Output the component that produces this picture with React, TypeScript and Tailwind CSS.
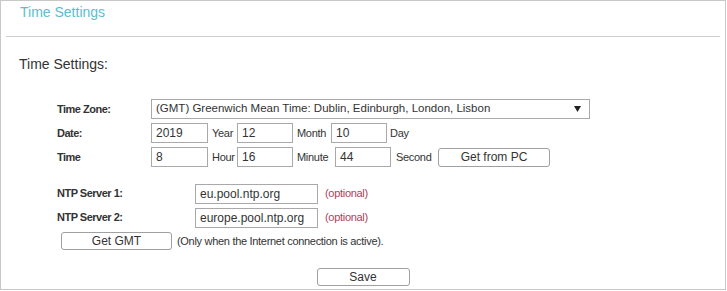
export default function App() {
  const base = "h-[20px] border border-[#a9a9a9] bg-white pl-[4px] flex items-center text-[#333]";
  const box = base + " text-[12px]";
  const lbl = "text-[11px] font-bold tracking-[-0.5px]";
  const txt = "text-[11px] tracking-[-0.3px]";
  const btn = "border border-[#a0a0a0] rounded-[3px] bg-white text-[12px] leading-none text-[#333]";
  return (
    <div className="w-[726px] h-[290px] border border-[#c8c8c8] bg-white text-[#333] font-['Liberation_Sans',Arial,sans-serif]">
      <div className="h-[35px] pl-[19px] pt-[2px] text-[14px] leading-[18px] text-[#5bbdd2]">Time Settings</div>
      <div className="mx-[5px] h-px bg-[#cfcfcf]" />
      <div className="mt-[19px] pl-[18px] text-[14px] leading-[16px]">Time Settings:</div>

      <div className="mt-[27px] pl-[56px] flex flex-col">
        <div className="flex items-center h-[20px]">
          <div className={"w-[94px] " + lbl}>Time Zone:</div>
          <div className={base + " w-[439px] justify-between pr-[8px] text-[11.5px]"}>
            <span>(GMT) Greenwich Mean Time: Dublin, Edinburgh, London, Lisbon</span>
            <svg width="7" height="6" viewBox="0 0 7 6"><path d="M0 0h7L3.5 6z" fill="#222" /></svg>
          </div>
        </div>

        <div className="flex items-center h-[20px] mt-[4px]">
          <div className={"w-[94px] " + lbl}>Date:</div>
          <div className={box + " w-[57px]"}>2019</div>
          <span className={"w-[29px] pl-[4px] " + txt}>Year</span>
          <div className={box + " w-[56px]"}>12</div>
          <span className={"w-[38px] pl-[4px] " + txt}>Month</span>
          <div className={box + " w-[56px]"}>10</div>
          <span className={"pl-[3px] " + txt}>Day</span>
        </div>

        <div className="flex items-center h-[20px] mt-[4px]">
          <div className={"w-[94px] " + lbl}>Time</div>
          <div className={box + " w-[57px]"}>8</div>
          <span className={"w-[29px] pl-[4px] " + txt}>Hour</span>
          <div className={box + " w-[56px]"}>16</div>
          <span className={"w-[42px] pl-[4px] " + txt}>Minute</span>
          <div className={box + " w-[56px]"}>44</div>
          <span className={"w-[47px] pl-[5px] " + txt}>Second</span>
          <button className={"w-[112px] h-[19px] " + btn}>Get from PC</button>
        </div>

        <div className="flex items-center h-[19px] mt-[17px]">
          <div className={"w-[138px] " + lbl}>NTP Server 1:</div>
          <div className={box + " w-[123px] h-[19px]"}>eu.pool.ntp.org</div>
          <span className={"ml-[7px] text-[#a8435c] " + txt}>(optional)</span>
        </div>
        <div className="flex items-center h-[19px] mt-[5px]">
          <div className={"w-[138px] " + lbl}>NTP Server 2:</div>
          <div className={box + " w-[123px] h-[19px]"}>europe.pool.ntp.org</div>
          <span className={"ml-[7px] text-[#a8435c] " + txt}>(optional)</span>
        </div>

        <div className="flex items-center h-[18px] mt-[5px]">
          <button className={"ml-[4px] w-[111px] h-[18px] " + btn}>Get GMT</button>
          <span className={"ml-[5px] " + txt}>(Only when the Internet connection is active).</span>
        </div>
      </div>

      <div className="mt-[18px] flex justify-center">
        <button className={"w-[93px] h-[18px] " + btn}>Save</button>
      </div>
    </div>
  );
}
